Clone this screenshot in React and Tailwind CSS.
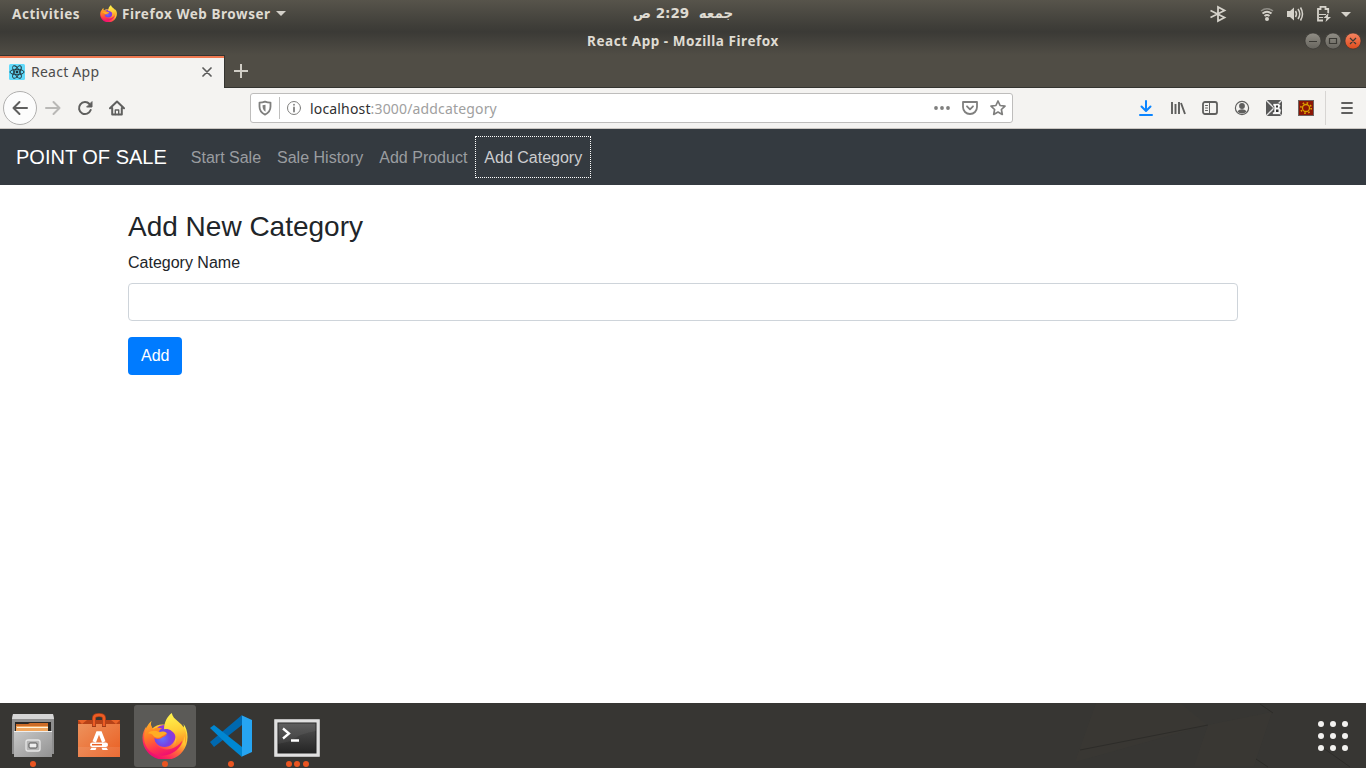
import React from 'react';

const ui = "font-['Noto_Sans','Open_Sans',sans-serif]";

function FirefoxLogo({ size, id }) {
  return (
    <svg width={size} height={size} viewBox="0 0 48 48" className="shrink-0">
      <defs>
        <linearGradient id={id + 'a'} x1="0.85" y1="0.1" x2="0.25" y2="1">
          <stop offset="0" stopColor="#fff044" />
          <stop offset="0.35" stopColor="#ffc02e" />
          <stop offset="0.55" stopColor="#ff7139" />
          <stop offset="0.78" stopColor="#ff2a5a" />
          <stop offset="1" stopColor="#e5007d" />
        </linearGradient>
        <radialGradient id={id + 'b'} cx="0.4" cy="0.6" r="0.65">
          <stop offset="0" stopColor="#6173ff" />
          <stop offset="0.55" stopColor="#7543e3" />
          <stop offset="1" stopColor="#a72bd0" />
        </radialGradient>
        <linearGradient id={id + 'c'} x1="0.4" y1="0" x2="0.5" y2="1">
          <stop offset="0" stopColor="#fff44f" />
          <stop offset="0.45" stopColor="#ffd036" />
          <stop offset="0.75" stopColor="#ff9a27" />
          <stop offset="1" stopColor="#ff5b3a" />
        </linearGradient>
        <linearGradient id={id + 'd'} x1="0.1" y1="0" x2="0.5" y2="1">
          <stop offset="0" stopColor="#ffb12b" />
          <stop offset="0.4" stopColor="#ff7a25" />
          <stop offset="0.75" stopColor="#ff3550" />
          <stop offset="1" stopColor="#f0126f" />
        </linearGradient>
      </defs>
      <path d="M10 8c-1 3-1 6 1 8C15 12 21 11 27 13l16 3c1-2 1-3 0-5 3 4 4.500 9 4.500 14C47.500 39 37 49 24 49S0.500 39 0.500 26c0-5 2-9 4-12 0 2 0 3 1 4 1-4 2-8 4.500-10z" fill={`url(#${id}a)`} />
      <circle cx="23.500" cy="24" r="11.500" fill={`url(#${id}b)`} />
      <path d="M31 0c-5 4-8 10-8 17 5-1 10 2 12 7s0 11-5 14c-2 1-4 2-6 2 11 2 20-6 20-16 1 3 1 6 1 8C49 20 44 14 38 9c-4-3-6-5-7-9z" fill={`url(#${id}c)`} />
      <path d="M9 9c-6 6-9 16-5 25 4 9 15 13 25 9 7-3 12-8 13-14-5 7-14 11-21 8-5-2-8-6-8-11 3 2 7 1 9-1 3-1 4-3 4-4l-8-1c0-2 1-3 3-4-4-1-7-1-9 1-2-2-3-5-3-8z" fill={`url(#${id}d)`} />
      <path d="M6 21c4-3 8-3 12-1 3-1 5-1 8 1-2 1-3 2-5 3-3 3-7 2-9 0-1-2-3-3-6-3z" fill="#ffad24" />
    </svg>
  );
}

function Icon({ children, box = '0 0 16 16', className = 'size-4 text-[#5f5f5e]' }) {
  return (
    <svg viewBox={box} className={`shrink-0 ${className}`} fill="none" stroke="currentColor" strokeWidth="2" strokeLinecap="round" strokeLinejoin="round">
      {children}
    </svg>
  );
}

function TopBar() {
  return (
    <div className={`flex h-[27px] items-center font-bold text-[#dfdbd2] ${ui}`}>
      <span className="ml-3 w-[88px] whitespace-nowrap pt-px text-[13.500px] tracking-[0.550px]">Activities</span>
      <FirefoxLogo size={17} id="small" />
      <span className="ml-[5px] w-[154px] whitespace-nowrap pt-px text-[13.500px] tracking-[0.550px]">Firefox Web Browser</span>
      <svg width="10" height="5" viewBox="0 0 10 5"><path d="M0 0h10L5 5z" fill="#d3d0c9" /></svg>
      <span dir="rtl" className="ml-[342px] w-[110px] whitespace-pre text-center font-['DejaVu_Sans',sans-serif] text-[13.500px]">جمعه  2:29 ص</span>
      <svg width="156" height="26" viewBox="1210 0 156 26" className="ml-auto shrink-0" fill="none" stroke="#d5d2ca" strokeWidth="1.800">
        <path d="M1210.500 9.500l14 7-6.500 3.500V6l6.500 3.500-14 7" />
        <path d="M1261 10q6-4.500 12 0" stroke="#8f8d86" strokeWidth="1.500" />
        <path d="M1262.500 12.500q4.500-3.500 9 0M1264.500 15q2.500-2 5 0" />
        <circle cx="1267" cy="18" r="2" fill="#d5d2ca" stroke="none" />
        <path d="M1287 10h3l4-3.500v13l-4-3.500h-3z" fill="#d5d2ca" stroke="none" />
        <path d="M1295.500 10q2 3 0 6M1298 8q3.500 5 0 10M1300.500 6.500q4 6.500 0 13" strokeWidth="1.500" />
        <path d="M1323 19.500h-5V8h2.500V5.800h5V8h2.700v4" />
        <path d="M1319 13.500h7M1319 16.500h4" strokeWidth="1.200" />
        <path d="M1328.500 12l-5 5h3l-1 4 5.500-5h-3z" fill="#d5d2ca" stroke="none" />
        <path d="M1341 11h10l-5 5z" fill="#d5d2ca" stroke="none" />
      </svg>
    </div>
  );
}

function TitleBar() {
  return (
    <div className={`relative flex h-7 items-center justify-center text-[13.500px] font-bold tracking-[0.550px] text-[#dfdbd2] ${ui}`}>
      <span className="whitespace-nowrap">React App - Mozilla Firefox</span>
      <svg width="62" height="20" viewBox="0 0 62 20" className="absolute right-0 top-1" fill="none">
        <defs>
          <linearGradient id="wg" x1="0" y1="0" x2="0" y2="1"><stop stopColor="#918e86" /><stop offset="1" stopColor="#66645d" /></linearGradient>
          <linearGradient id="wr" x1="0" y1="0" x2="0" y2="1"><stop stopColor="#f58562" /><stop offset="1" stopColor="#df4b1c" /></linearGradient>
        </defs>
        <circle cx="9" cy="10" r="8" fill="url(#wg)" stroke="#34332f" strokeWidth="0.600" />
        <circle cx="29" cy="10" r="8" fill="url(#wg)" stroke="#34332f" strokeWidth="0.600" />
        <circle cx="49" cy="10" r="8" fill="url(#wr)" stroke="#34332f" strokeWidth="0.600" />
        <path d="M5 10.500h8M25.500 7.500h7v5h-7zM46 7l6 6M52 7l-6 6" stroke="#3b3a35" strokeWidth="1.200" />
      </svg>
    </div>
  );
}

function Tabs() {
  return (
    <div className="flex h-[33px] items-stretch">
      <div className={`flex w-[225px] items-center border-r border-t border-[#343430] bg-[#f4f3f1] shadow-[inset_0_2px_0_#ef7850] ${ui}`}>
        <svg viewBox="0 0 16 16" className="ml-[9px] size-4 shrink-0" fill="none" stroke="#20333a" strokeWidth="0.900">
          <rect width="16" height="16" rx="1.500" fill="#61dafb" stroke="none" />
          <ellipse cx="8" cy="8" rx="7" ry="2.700" />
          <ellipse cx="8" cy="8" rx="7" ry="2.700" transform="rotate(60 8 8)" />
          <ellipse cx="8" cy="8" rx="7" ry="2.700" transform="rotate(120 8 8)" />
          <circle cx="8" cy="8" r="1.400" fill="#20333a" stroke="none" />
        </svg>
        <span className="ml-1.5 whitespace-nowrap pb-0.5 text-[14px] tracking-[0.250px] text-[#4c4c4c]">React App</span>
        <svg viewBox="0 0 10 10" className="ml-auto mr-3 w-[10px]" stroke="#5c5c5b" strokeWidth="1.700" strokeLinecap="round"><path d="M1 1l8 8M9 1L1 9" /></svg>
      </div>
      <div className="flex flex-1 items-center border-b border-[#343430]">
        <svg viewBox="0 0 14 14" className="ml-[9px] size-3.5" stroke="#d0cdc5" strokeWidth="2"><path d="M7 0v14M0 7h14" /></svg>
      </div>
    </div>
  );
}

function Toolbar() {
  return (
    <div className="flex h-[41px] items-center border-b border-[#c9c5c1] bg-[#f4f3f1]">
      <div className="ml-[3px] flex size-[34px] shrink-0 items-center justify-center rounded-full border border-[#b0afae] bg-[#fcfcfc]">
        <Icon><path d="M15 8H1.500M7.500 2L1.500 8l6 6" /></Icon>
      </div>
      <Icon className="ml-2 size-4 text-[#b9b8b6]"><path d="M1 8h13.500M8.500 2l6 6-6 6" /></Icon>
      <Icon className="ml-4 size-4 text-[#5f5f5e]"><path d="M12.500 4A6 6 0 1 0 13.700 10" /><path d="M15 2v5h-5z" fill="currentColor" strokeWidth="1" /></Icon>
      <Icon className="ml-4 size-4 text-[#5f5f5e]"><path d="M1 8.200L8 1.500l7 6.700M3.200 8v6.500h9.600V8" /><path d="M6.300 14.500V10h3.400v4.500" strokeWidth="1.400" /></Icon>
      <div className={`ml-[125px] flex h-[30px] w-[763px] items-center rounded-[3px] border border-[#bebdbc] bg-white text-[14px] ${ui}`}>
        <Icon className="ml-1.5 size-4 text-[#7f7f7e]"><path d="M8 1.600c2 .8 4 1 5.500 1v4c0 4-2 6.500-5.500 8-3.500-1.500-5.500-4-5.500-8v-4c1.500 0 3.500-.2 5.500-1z" strokeWidth="1.800" /><path d="M8.500 4.700v7C6 10 5.500 8 5.500 5.200z" fill="currentColor" stroke="none" /></Icon>
        <div className="ml-1.5 h-[22px] w-px bg-[#bfbfbe]" />
        <Icon className="ml-1.5 size-4 text-[#7f7f7e]"><circle cx="8" cy="8" r="6.500" strokeWidth="1" /><path d="M8 7.500v4M8 4.700v.1" strokeWidth="1.800" /></Icon>
        <span className="ml-2 whitespace-nowrap tracking-[0.160px] text-[#a0a0a0]"><span className="text-[#303030]">localhost</span>:3000/addcategory</span>
        <Icon className="ml-auto size-4 text-[#7f7f7e]"><g fill="currentColor" stroke="none"><circle cx="2" cy="8" r="1.900" /><circle cx="8" cy="8" r="1.900" /><circle cx="14" cy="8" r="1.900" /></g></Icon>
        <Icon className="ml-3 size-4 text-[#7f7f7e]"><path d="M1 2h14v5C15 11 12 14 8 14S1 11 1 7zM5 6.300l3 3 3-3" strokeWidth="1.800" /></Icon>
        <Icon className="ml-3 mr-1.5 size-4 text-[#7f7f7e]"><path d="M8 1l2.100 4.500 4.900.6-3.600 3.400.9 4.900L8 12l-4.300 2.400.9-4.900L1 6.100l4.900-.6z" strokeWidth="1.700" /></Icon>
      </div>
      <div className="ml-auto mr-[11px] flex shrink-0 items-center gap-4">
        <Icon className="size-4 text-[#0a84ff]"><path d="M8 1v9M3.500 6.500L8 11l4.500-4.500M2 15h12" /></Icon>
        <Icon><path d="M2 2v12M5.500 4v10M9 2v12M11 3l4 11" strokeWidth="1.900" strokeLinecap="butt" /></Icon>
        <Icon><rect x="1" y="2" width="14" height="12" rx="2" strokeWidth="1.800" /><path d="M7.500 2v12M3.500 5.500h2M3.500 8h2M3.500 10.500h2" strokeWidth="1" /></Icon>
        <Icon><circle cx="8" cy="8" r="6.600" strokeWidth="1.200" /><circle cx="8" cy="6" r="2.900" fill="currentColor" stroke="none" /><path d="M3.500 11.500c2-3 7-3 9 0-2 2.500-7 2.500-9 0z" fill="currentColor" stroke="none" /></Icon>
        <svg viewBox="0 0 16 16" className="size-4"><path fill="#585858" d="M0 0h16v16H0z" /><path d="M0 0l16 16M16 0L0 16" stroke="#e4e4e4" strokeWidth="1.300" /><path d="M7 3.500h6l1.700 2-1 2.500 1.600 2-1 4.500H6.500V12H8V6H7z" fill="#f7f7f7" stroke="#333" strokeWidth=".5" /><path d="M10 5.500h2v2h-2zM10 9.500h2.500v2.500H10z" fill="#333" /></svg>
        <svg viewBox="0 0 16 16" className="size-4"><rect x=".5" y=".5" width="15" height="15" fill="#8c1606" stroke="#6e6460" /><circle cx="8" cy="8" r="3.500" fill="none" stroke="#dba000" strokeWidth="1.300" /><circle cx="8" cy="8" r="5.200" fill="none" stroke="#dba000" strokeWidth="1.700" strokeDasharray="1.600 2.484" /></svg>
        <div className="-ml-[5px] -mr-[3px] h-[34px] w-px bg-[#d7d5d3]" />
        <Icon><path d="M3 3h10M3 8h10M3 13h10" strokeWidth="1.800" /></Icon>
      </div>
    </div>
  );
}

function Page() {
  return (
    <div className="flex h-[574px] flex-col bg-white font-['Liberation_Sans',Arial,sans-serif] text-base text-[#212529]">
      <nav className="flex h-14 items-center bg-[#343a40] px-4 text-[#9a9da0]">
        <a className="mr-4 whitespace-nowrap text-xl text-white">POINT OF SALE</a>
        <a className="px-2 pb-[7px] pt-[9px]">Start Sale</a>
        <a className="px-2 pb-[7px] pt-[9px]">Sale History</a>
        <a className="px-2 pb-[7px] pt-[9px]">Add Product</a>
        <a className="border border-dotted border-white pb-[7px] pl-2 pr-2 pt-[9px] text-[#cccdcf]">Add Category</a>
      </nav>
      <main className="mx-32 pt-[25px]">
        <h3 className="mb-[7px] text-[28px] leading-[34px]">Add New Category</h3>
        <label className="mb-2 block leading-6">Category Name</label>
        <input className="block h-[38px] w-full rounded border border-[#ced4da] bg-white px-3" />
        <button className="mt-4 h-[38px] rounded bg-[#007bff] px-[13px] text-white">Add</button>
      </main>
    </div>
  );
}

function Files() {
  return (
    <svg viewBox="0 0 44 46" className="h-[46px] w-11">
      <defs><linearGradient id="fg" x1="0" y1="0" x2="1" y2="1"><stop stopColor="#c8c8c8" /><stop offset="1" stopColor="#929292" /></linearGradient></defs>
      <path d="M2 1h40l1 4v36H1V5z" fill="#8e8e8e" />
      <path d="M2 1h40l1 5H1z" fill="#d6d6d6" />
      <path d="M4 9h36v9H4z" fill="#282624" />
      <path d="M5 11h12l2-1h18v8H5z" fill="#cc6b27" /><path d="M5 13h32v5H5z" fill="#f0a65e" /><path d="M6 14.500h31" stroke="#fff2dc" />
      <path d="M3 18h38v26H3z" fill="url(#fg)" /><path d="M3 18.500h38" stroke="#eee" />
      <rect x="15" y="27" width="14" height="11" rx="2" fill="#b5b5b5" stroke="#e6e6e6" strokeWidth="1.300" />
      <rect x="18" y="30" width="8" height="5" rx="1" fill="#eee" stroke="#555" />
    </svg>
  );
}

function Software() {
  return (
    <svg viewBox="0 0 44 46" className="h-[46px] w-11">
      <defs><linearGradient id="sg" x1="0" y1="0" x2="1" y2="1"><stop stopColor="#ed925c" /><stop offset="1" stopColor="#ea5e22" /></linearGradient></defs>
      <path d="M1 7h42v10H1z" fill="#b74217" /><path d="M1 7l4 4 5-4M34 7l5 4 4-4" fill="#e96329" />
      <path d="M1 11h42v33H1z" fill="url(#sg)" /><path d="M1 34h42v10H1z" fill="#fff" opacity=".09" />
      <path d="M17 14V5q0-3 5-3t5 3v9" fill="none" stroke="#9f3d1a" strokeWidth="4" /><path d="M17 13V5q0-3 5-3t5 3v8" fill="none" stroke="#ed5c23" strokeWidth="2.500" />
      <path d="M17.200 29l3.500-9h2.600l3.500 9" fill="none" stroke="#fff" strokeWidth="3.600" />
      <rect x="13" y="29.500" width="18" height="4.500" rx="2.250" fill="#fff" /><path d="M15 31.700h10" stroke="#ea6225" strokeWidth="1.500" />
      <path d="M14.500 34.800h5l-1 2.200h-5.500zM29.500 34.800h-5l1 2.200h5.500z" fill="#fff" />
    </svg>
  );
}

function Code() {
  return (
    <svg viewBox="0 0 44 44" className="size-11">
      <path d="M1 28l4 5 28-22V1L20 12z" fill="#0069b0" /><path d="M1 14l4-3 28 22v10L20 32z" fill="#0087d2" />
      <path d="M32 1l11 5v32l-11 5c1 0 1-1 1-2V3c0-1 0-2-1-2z" fill="#26a5f2" />
    </svg>
  );
}

function Terminal() {
  return (
    <svg viewBox="0 0 46 38" className="h-[38px] w-[46px]">
      <defs><linearGradient id="tg" x1="0" y1="0" x2="0" y2="1"><stop stopColor="#555" /><stop offset="1" stopColor="#242424" /></linearGradient></defs>
      <rect width="46" height="38" rx="1" fill="#bdbdbd" /><rect x="1" y="1" width="44" height="36" fill="#e0e0e0" /><rect x="4" y="4" width="38" height="30" fill="url(#tg)" stroke="#222" />
      <path d="M4 4h38v8Q27 14 17 22L4 25z" fill="#fff" opacity=".06" />
      <path d="M9 9.500l6 5-6 5M17 21.500h8" fill="none" stroke="#fff" strokeWidth="2.300" />
    </svg>
  );
}

function DockItem({ children, dots = 0, active = false }) {
  return (
    <div className={`relative flex h-[62px] w-[62px] items-center justify-center rounded-[3px] ${active ? 'bg-[#5b5a57]' : ''}`}>
      {children}
      <div className="absolute inset-x-0 bottom-0 flex justify-center gap-[2.500px]">
        {Array.from({ length: dots }, (_, i) => <span key={i} className="size-[6px] rounded-full bg-[#e95420]" />)}
      </div>
    </div>
  );
}

function Dock() {
  return (
    <div className="relative flex h-[65px] items-center bg-[#373633] pl-0.5">
      <svg className="absolute right-0 top-0" width="306" height="65" viewBox="0 0 306 65">
        <path d="M36 0L15 59l132-37L120 0z" fill="#3b3934" opacity=".6" /><path d="M148 22l64-13-18 54h-60z" fill="#3b3934" opacity=".6" />
        <path d="M20 47l128-25M200 1l13 9M196 56l12 8M262 44l28 20" stroke="#2d2c29" fill="none" />
      </svg>
      <div className="flex gap-1">
        <DockItem dots={1}><Files /></DockItem>
        <DockItem><Software /></DockItem>
        <DockItem dots={1} active><FirefoxLogo size={46} id="large" /></DockItem>
        <DockItem dots={1}><Code /></DockItem>
        <DockItem dots={3}><div className="pt-1"><Terminal /></div></DockItem>
      </div>
      <div className="relative ml-auto mr-[18px] grid grid-cols-3 gap-[6px]">
        {Array.from({ length: 9 }, (_, i) => <span key={i} className="size-[6px] rounded-full bg-[#f2f1ef]" />)}
      </div>
    </div>
  );
}

export default function App() {
  return (
    <div className="flex h-[768px] w-[1366px] flex-col overflow-hidden bg-[#504d45]">
      <div className="h-[55px] bg-[linear-gradient(#57544b_0px,#3e3d38_27px,#3b3a36_32px,#504d45_55px)]">
        <TopBar />
        <TitleBar />
      </div>
      <Tabs />
      <Toolbar />
      <Page />
      <Dock />
    </div>
  );
}
